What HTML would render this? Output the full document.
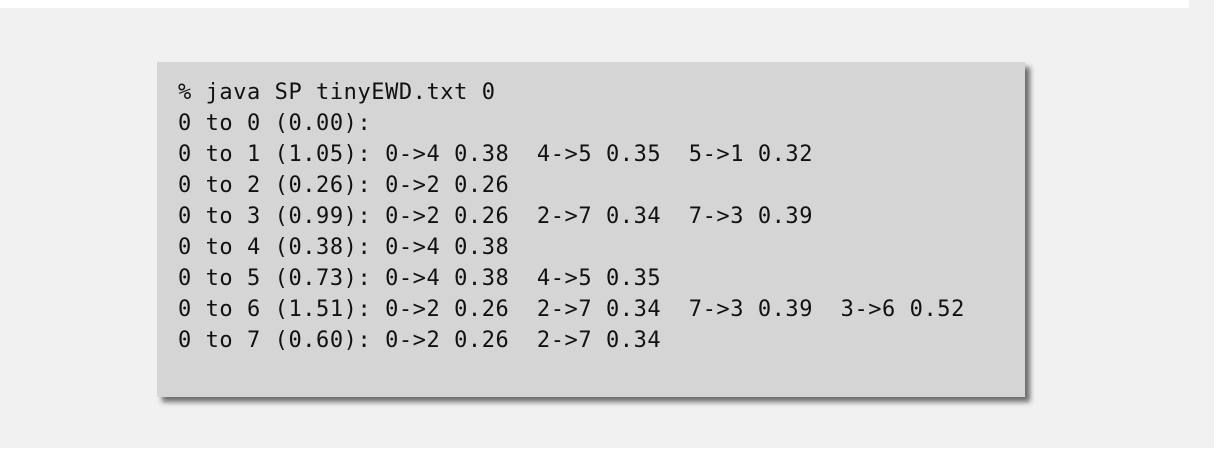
<!DOCTYPE html>
<html><head><style>
html,body{margin:0;padding:0;width:1214px;height:449px;overflow:hidden;background:#f1f1f1;position:relative}
.top{position:absolute;left:0;top:0;width:1189px;height:8px;background:#fff}
.bot{position:absolute;left:0;top:448px;width:1214px;height:1px;background:#fff}
.box{position:absolute;left:157px;top:62px;width:868px;height:335px;background:#d5d5d5;box-shadow:5px 5px 5px rgba(0,0,0,0.55)}
pre{position:absolute;left:21px;top:15px;margin:0;font-family:"DejaVu Sans Mono","Liberation Mono",monospace;font-size:22px;letter-spacing:0.56px;line-height:31px;color:#111}
</style></head><body>
<div class="top"></div><div class="bot"></div>
<div class="box"><pre>% java SP tinyEWD.txt 0
0 to 0 (0.00):
0 to 1 (1.05): 0->4 0.38  4->5 0.35  5->1 0.32
0 to 2 (0.26): 0->2 0.26
0 to 3 (0.99): 0->2 0.26  2->7 0.34  7->3 0.39
0 to 4 (0.38): 0->4 0.38
0 to 5 (0.73): 0->4 0.38  4->5 0.35
0 to 6 (1.51): 0->2 0.26  2->7 0.34  7->3 0.39  3->6 0.52
0 to 7 (0.60): 0->2 0.26  2->7 0.34</pre></div>
</body></html>
